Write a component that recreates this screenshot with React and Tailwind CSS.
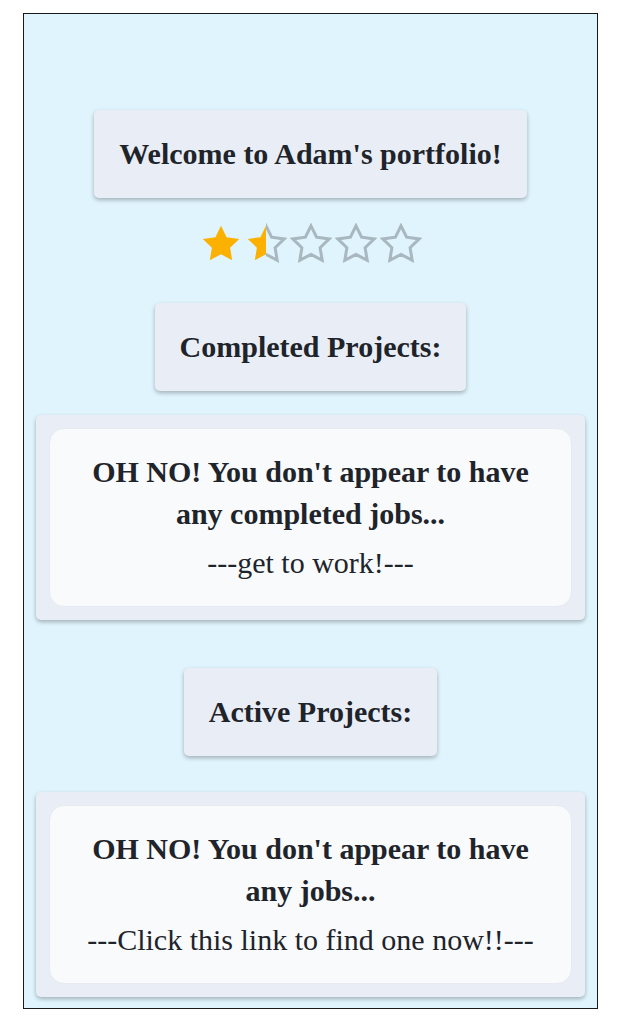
const STAR = "12,1.6 15.2,8.1 22.4,9.1 17.2,14.1 18.4,21.3 12,17.9 5.6,21.3 6.8,14.1 1.6,9.1 8.8,8.1"

/* ── Star icons ── */
function Star({ kind }) {
  return (
    <svg width="42" height="42" viewBox="0 0 24 24">
      <defs>
        <clipPath id="halfL"><rect x="0" y="0" width="12" height="24" /></clipPath>
        <clipPath id="halfR"><rect x="12" y="0" width="12" height="24" /></clipPath>
      </defs>
      {kind === 'full' && <polygon points={STAR} fill="#fcb000" />}
      {kind === 'half' && (
        <>
          <polygon points={STAR} fill="#fcb000" clipPath="url(#halfL)" />
          <polygon points={STAR} fill="none" stroke="#a9b7bf" strokeWidth="1.7" strokeLinejoin="miter" clipPath="url(#halfR)" />
        </>
      )}
      {kind === 'empty' && (
        <polygon points={STAR} fill="none" stroke="#a9b7bf" strokeWidth="1.7" strokeLinejoin="miter" />
      )}
    </svg>
  )
}

function Heading({ children, className = '' }) {
  return (
    <div className={`bg-[#e9eef6] rounded-[5px] shadow-[0_2px_4px_rgba(0,0,0,0.28)] px-[25px] py-[23px] text-[30px] leading-[42px] font-bold ${className}`}>
      {children}
    </div>
  )
}

function EmptyCard({ title, note, className = '' }) {
  return (
    <div className={`w-full bg-[#e9eef6] rounded-[5px] shadow-[0_2px_4px_rgba(0,0,0,0.28)] p-[13px] ${className}`}>
      <div className="bg-[#f8fafc] rounded-[15px] border border-[#e6ebf1] px-[30px] py-[22px] text-center text-[30px] leading-[42px]">
        <p className="font-bold">{title}</p>
        <p className="mt-[7px]">{note}</p>
      </div>
    </div>
  )
}

export default function App() {
  return (
    <div className="min-h-screen bg-white pt-[13px] pl-[23px] font-['Liberation_Serif',serif] text-[#1e242a]">
      <div className="w-[575px] h-[996px] border border-[#1a1a1a] bg-[#dff4fd] px-[12px] flex flex-col items-center">
        <Heading className="mt-[96px]">Welcome to Adam's portfolio!</Heading>

        <div className="mt-[25px] flex gap-[3px]">
          <Star kind="full" />
          <Star kind="half" />
          <Star kind="empty" />
          <Star kind="empty" />
          <Star kind="empty" />
        </div>

        <Heading className="mt-[38px]">Completed Projects:</Heading>
        <EmptyCard
          className="mt-[24px]"
          title="OH NO! You don't appear to have any completed jobs..."
          note="---get to work!---"
        />

        <Heading className="mt-[48px]">Active Projects:</Heading>
        <EmptyCard
          className="mt-[36px]"
          title="OH NO! You don't appear to have any jobs..."
          note="---Click this link to find one now!!---"
        />
      </div>
    </div>
  )
}
